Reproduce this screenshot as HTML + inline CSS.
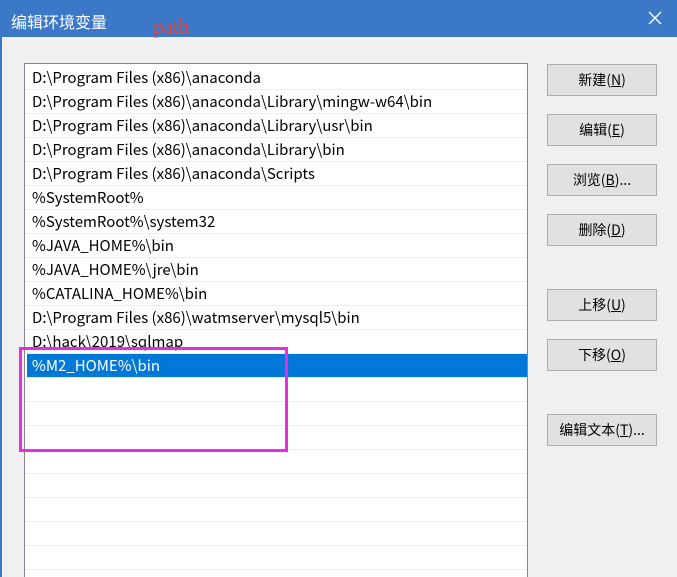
<!DOCTYPE html><html style="overflow:hidden"><head><meta charset="utf-8"><style>
html,body{margin:0;width:677px;height:577px;overflow:hidden;}
body{background:#f0f0f0;position:relative;font-family:"Liberation Sans","Noto Sans CJK SC",sans-serif;}
.tb{position:absolute;left:0;top:0;width:677px;height:37px;background:#3c78c8;}
.lb{position:absolute;left:0;top:37px;width:2px;height:540px;background:#3c78c8;}
.title{position:absolute;left:11px;top:9px;color:#fff;font-size:16px;font-family:"Noto Sans CJK SC",sans-serif;}
.x{position:absolute;left:647px;top:10px;width:16px;height:16px;}
.path{position:absolute;left:153px;top:14px;color:#e8403a;font-family:"Liberation Serif","DejaVu Serif",serif;font-size:21px;line-height:24px;}
.list{position:absolute;left:24px;top:63px;width:502px;height:514px;background:#fff;border:1px solid #828790;border-bottom:none;overflow:hidden;}
.row{height:23px;border-bottom:1px solid #ececec;font-size:15px;line-height:23px;padding-left:7px;color:#000;font-family:"Noto Sans CJK SC","Liberation Sans",sans-serif;}
.row.sel{background:#0078d7;color:#fff;margin-left:2px;padding-left:5px;}
.btn{position:absolute;left:547px;width:108px;height:30px;background:#e1e1e1;border:1px solid #adadad;font-size:14px;text-align:center;line-height:30px;font-family:"Noto Sans CJK SC",sans-serif;}
.mag{position:absolute;left:19px;top:347px;width:263px;height:99px;border:3px solid #e82ce0;}
</style></head><body>
<div class="tb"></div><div class="lb"></div>
<div class="title">编辑环境变量</div>
<svg class="x" viewBox="0 0 16 16"><path d="M2 2L14 14M14 2L2 14" stroke="#fff" stroke-width="1.4"/></svg>
<div class="path">path</div>
<div class="list">
<div style="height:2px"></div>
<div class="row">D:\Program Files (x86)\anaconda</div>
<div class="row">D:\Program Files (x86)\anaconda\Library\mingw-w64\bin</div>
<div class="row">D:\Program Files (x86)\anaconda\Library\usr\bin</div>
<div class="row">D:\Program Files (x86)\anaconda\Library\bin</div>
<div class="row">D:\Program Files (x86)\anaconda\Scripts</div>
<div class="row">%SystemRoot%</div>
<div class="row">%SystemRoot%\system32</div>
<div class="row">%JAVA_HOME%\bin</div>
<div class="row">%JAVA_HOME%\jre\bin</div>
<div class="row">%CATALINA_HOME%\bin</div>
<div class="row">D:\Program Files (x86)\watmserver\mysql5\bin</div>
<div class="row">D:\hack\2019\sqlmap</div>
<div class="row sel">%M2_HOME%\bin</div>
<div class="row"></div><div class="row"></div><div class="row"></div><div class="row"></div><div class="row"></div><div class="row"></div><div class="row"></div><div class="row"></div><div class="row"></div>
</div>
<div class="mag"></div>
<div class="btn" style="top:64px">新建(<u>N</u>)</div>
<div class="btn" style="top:114px">编辑(<u>E</u>)</div>
<div class="btn" style="top:164px">浏览(<u>B</u>)...</div>
<div class="btn" style="top:214px">删除(<u>D</u>)</div>
<div class="btn" style="top:289px">上移(<u>U</u>)</div>
<div class="btn" style="top:339px">下移(<u>O</u>)</div>
<div class="btn" style="top:414px">编辑文本(<u>T</u>)...</div>
</body></html>
